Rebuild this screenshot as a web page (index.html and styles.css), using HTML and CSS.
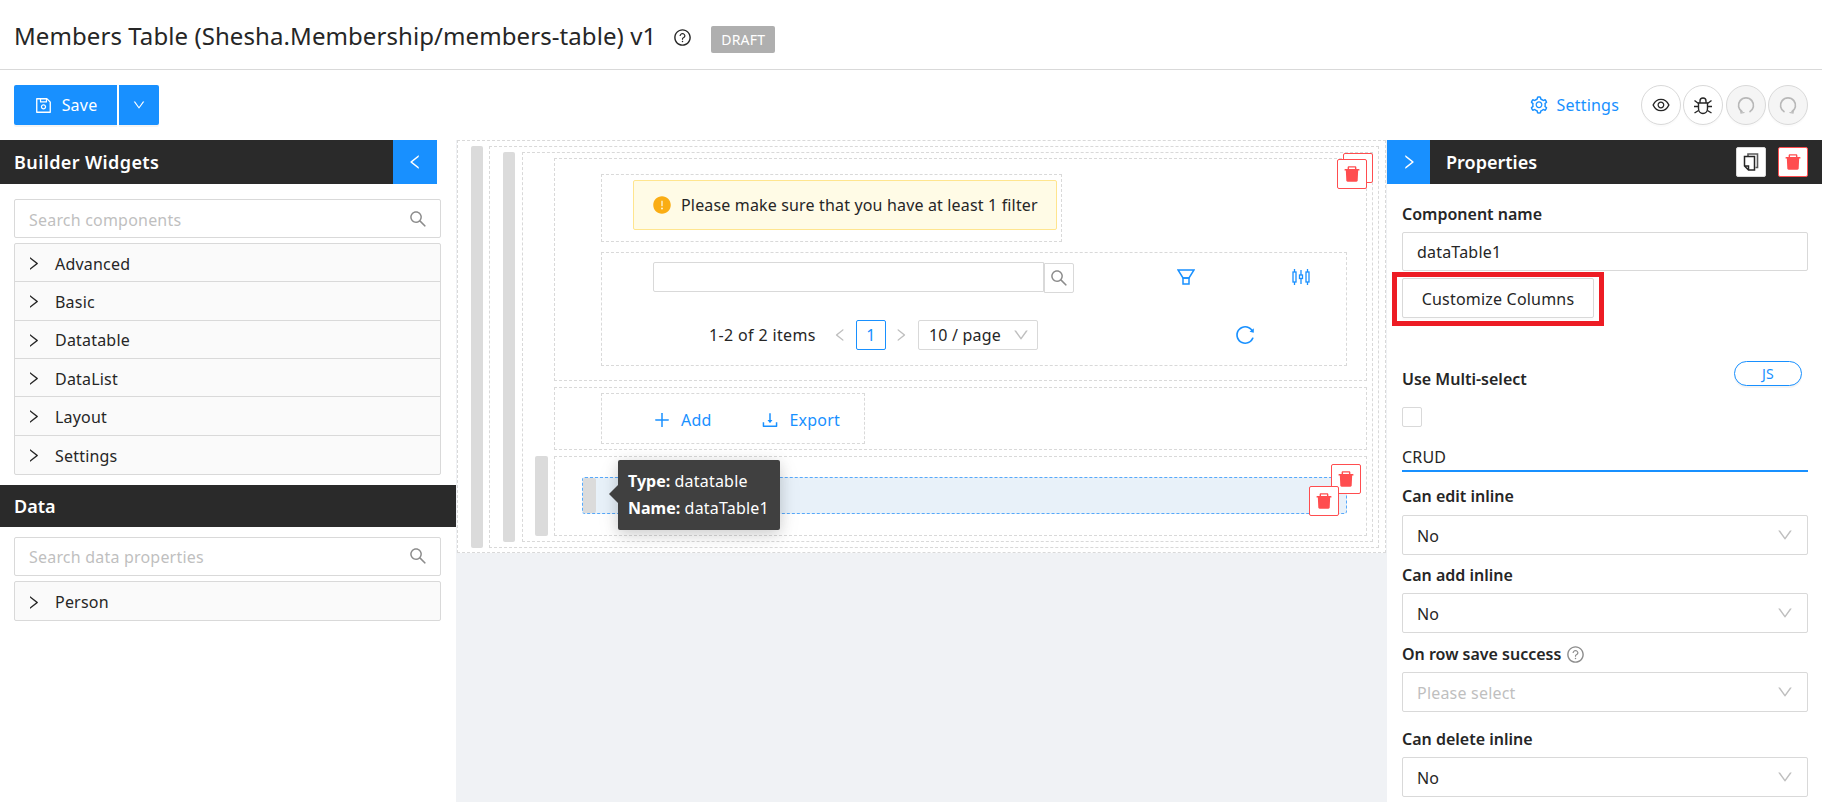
FILE: index.html
```html
<!DOCTYPE html>
<html lang="en">
<head>
<meta charset="utf-8">
<title>Members Table</title>
<link rel="stylesheet" href="styles.css">
</head>
<body>
<svg class="sprite" xmlns="http://www.w3.org/2000/svg">
  <symbol id="i-search" viewBox="0 0 1024 1024"><path d="M909.6 854.5L649.9 594.8C690.2 542.7 712 479 712 412c0-80.2-31.3-155.4-87.9-212.1-56.6-56.7-132-87.9-212.1-87.9s-155.5 31.3-212.1 87.9C143.2 256.5 112 331.8 112 412c0 80.1 31.3 155.5 87.9 212.1C256.5 680.8 331.8 712 412 712c67 0 130.6-21.8 182.7-62l259.7 259.6a8.2 8.2 0 0 0 11.6 0l43.6-43.5a8.2 8.2 0 0 0 0-11.6zM570.4 570.4C528 612.7 471.8 636 412 636s-116-23.3-158.4-65.6C211.3 528 188 471.8 188 412s23.3-116.1 65.6-158.4C296 211.3 352.2 188 412 188s116.1 23.2 158.4 65.6S636 352.2 636 412s-23.3 116.1-65.6 158.4z"/></symbol>
  <symbol id="i-down" viewBox="0 0 1024 1024"><path d="M884 256h-75c-5.1 0-9.9 2.5-12.9 6.6L512 654.2 227.9 262.6c-3-4.1-7.8-6.6-12.9-6.6h-75c-6.5 0-10.3 7.4-6.5 12.7l352.6 486.1c12.8 17.6 39 17.6 51.7 0l352.6-486.1c3.9-5.3.1-12.7-6.4-12.7z"/></symbol>
  <symbol id="i-right" viewBox="0 0 1024 1024"><path d="M765.7 486.8L314.9 134.7A7.97 7.97 0 0 0 302 141v77.3c0 4.9 2.3 9.6 6.1 12.6l360 281.1-360 281.1c-3.9 3-6.1 7.7-6.1 12.6V883c0 6.7 7.7 10.4 12.9 6.3l450.8-352.1a31.96 31.96 0 0 0 0-50.4z"/></symbol>
  <symbol id="i-left" viewBox="0 0 1024 1024"><path d="M724 218.3V141c0-6.7-7.7-10.4-12.9-6.3L260.3 486.8a31.86 31.86 0 0 0 0 50.3l450.8 352.1c5.3 4.1 12.9.4 12.9-6.3v-77.3c0-4.9-2.3-9.6-6.1-12.6l-360-281 360-281.1c3.8-3 6.1-7.7 6.1-12.6z"/></symbol>
  <symbol id="i-plus" viewBox="0 0 1024 1024"><path d="M482 152h60q8 0 8 8v704q0 8-8 8h-60q-8 0-8-8V160q0-8 8-8z"/><path d="M176 474h672q8 0 8 8v60q0 8-8 8H176q-8 0-8-8v-60q0-8 8-8z"/></symbol>
  <symbol id="i-warn" viewBox="0 0 1024 1024"><path d="M512 64C264.6 64 64 264.6 64 512s200.6 448 448 448 448-200.6 448-448S759.4 64 512 64zm-32 232c0-4.4 3.6-8 8-8h48c4.4 0 8 3.6 8 8v272c0 4.4-3.6 8-8 8h-48c-4.4 0-8-3.6-8-8V296zm32 440a48.01 48.01 0 0 1 0-96 48.01 48.01 0 0 1 0 96z"/></symbol>
  <symbol id="i-question" viewBox="0 0 1024 1024"><path d="M512 64C264.6 64 64 264.6 64 512s200.6 448 448 448 448-200.6 448-448S759.4 64 512 64zm0 820c-205.4 0-372-166.6-372-372s166.6-372 372-372 372 166.6 372 372-166.6 372-372 372z"/><path d="M623.6 316.7C593.6 290.4 554 276 512 276s-81.6 14.5-111.6 40.7C369.2 344 352 380.7 352 420v7.6c0 4.4 3.6 8 8 8h48c4.4 0 8-3.6 8-8V420c0-44.1 43.1-80 96-80s96 35.9 96 80c0 31.1-22 59.6-56.1 72.7-21.2 8.1-39.2 22.3-52.1 40.9-13.1 19-19.9 41.8-19.9 64.9V620c0 4.4 3.6 8 8 8h48c4.4 0 8-3.6 8-8v-22.7a48.3 48.3 0 0 1 30.9-44.8c59-22.7 97.1-74.7 97.1-132.5.1-39.3-17.1-76-48.3-103.3z"/><path d="M472 732a40 40 0 1 0 80 0 40 40 0 1 0-80 0z"/></symbol>
  <symbol id="i-eye" viewBox="0 0 1024 1024"><path d="M942.2 486.2C847.4 286.5 704.1 186 512 186c-192.2 0-335.4 100.5-430.2 300.3a60.3 60.3 0 0 0 0 51.5C176.6 737.5 319.9 838 512 838c192.2 0 335.4-100.5 430.2-300.3 7.7-16.2 7.7-35 0-51.5zM512 766c-161.3 0-279.4-81.8-362.7-254C232.6 339.8 350.7 258 512 258c161.3 0 279.4 81.8 362.7 254C791.5 684.2 673.4 766 512 766zm-4-430c-97.2 0-176 78.8-176 176s78.8 176 176 176 176-78.8 176-176-78.8-176-176-176zm0 288c-61.9 0-112-50.1-112-112s50.1-112 112-112 112 50.1 112 112-50.1 112-112 112z"/></symbol>
  <symbol id="i-trash" viewBox="0 0 1024 1024"><path d="M864 256H736v-80c0-35.3-28.7-64-64-64H352c-35.3 0-64 28.7-64 64v80H160c-17.7 0-32 14.3-32 32v32c0 4.4 3.6 8 8 8h60.4l24.7 523c1.6 34.1 29.8 61 63.9 61h454c34.2 0 62.3-26.8 63.9-61l24.7-523H888c4.4 0 8-3.6 8-8v-32c0-17.7-14.3-32-32-32zm-200 0H360v-72h304v72z"/></symbol>
  <symbol id="i-reload" viewBox="0 0 1024 1024"><path d="M909.1 209.3l-56.4 44.1C775.8 155.1 656.2 92 521.9 92 290 92 102.3 279.5 102 511.5 101.7 743.7 289.8 932 521.9 932c181.3 0 335.8-115 394.6-276.1 1.5-4.2-.7-8.9-4.9-10.3l-56.7-19.5a8 8 0 0 0-10.1 4.8c-1.8 5-3.8 10-5.9 14.9-17.3 41-42.1 77.8-73.7 109.4A344.77 344.77 0 0 1 655.9 829c-42.3 17.9-87.4 27-133.8 27-46.5 0-91.5-9.1-133.8-27A341.5 341.5 0 0 1 279 755.2a342.16 342.16 0 0 1-73.7-109.4c-17.9-42.4-27-87.4-27-133.9s9.1-91.5 27-133.9c17.3-41 42.1-77.8 73.7-109.4 31.6-31.6 68.4-56.4 109.3-73.8 42.3-17.9 87.4-27 133.8-27 46.5 0 91.5 9.1 133.8 27a341.5 341.5 0 0 1 109.3 73.8c9.9 9.9 19.2 20.4 27.8 31.4l-60.2 47a8 8 0 0 0 3 14.1l175.6 43c5 1.2 9.9-2.6 9.9-7.7l.8-180.9c-.1-6.6-7.8-10.3-13-6.2z"/></symbol>
  <symbol id="i-gear" viewBox="0 0 1024 1024"><path d="M924.8 625.7l-65.5-56c3.1-19 4.7-38.4 4.7-57.8s-1.6-38.8-4.7-57.8l65.5-56a32.03 32.03 0 0 0 9.3-35.2l-.9-2.6a443.74 443.74 0 0 0-79.7-137.9l-1.8-2.1a32.12 32.12 0 0 0-35.1-9.5l-81.3 28.9c-30-24.6-63.5-44-99.7-57.6l-15.7-85a32.05 32.05 0 0 0-25.8-25.7l-2.7-.5c-52.1-9.4-106.9-9.4-159 0l-2.7.5a32.05 32.05 0 0 0-25.8 25.7l-15.8 85.4a351.86 351.86 0 0 0-99 57.4l-81.9-29.1a32 32 0 0 0-35.1 9.5l-1.8 2.1a446.02 446.02 0 0 0-79.7 137.9l-.9 2.6c-4.5 12.5-.8 26.5 9.3 35.2l66.3 56.6c-3.1 18.8-4.6 38-4.6 57.1 0 19.2 1.5 38.4 4.6 57.1L99 625.5a32.03 32.03 0 0 0-9.3 35.2l.9 2.6c18.1 50.4 44.9 96.9 79.7 137.9l1.8 2.1a32.12 32.12 0 0 0 35.1 9.5l81.9-29.1c29.8 24.5 63.1 43.9 99 57.4l15.8 85.4a32.05 32.05 0 0 0 25.8 25.7l2.7.5a449.4 449.4 0 0 0 159 0l2.7-.5a32.05 32.05 0 0 0 25.8-25.7l15.7-85a350 350 0 0 0 99.7-57.6l81.3 28.9a32 32 0 0 0 35.1-9.5l1.8-2.1c34.8-41.1 61.6-87.5 79.7-137.9l.9-2.6c4.5-12.3.8-26.3-9.3-35zM788.3 465.9c2.5 15.1 3.8 30.6 3.8 46.1s-1.3 31-3.8 46.1l-6.6 40.1 74.7 63.9a370.03 370.03 0 0 1-42.6 73.6L721 702.8l-31.4 25.8c-23.9 19.6-50.5 35-79.3 45.8l-38.1 14.3-17.9 97a377.5 377.5 0 0 1-85 0l-17.9-97.2-37.8-14.5c-28.5-10.8-55-26.2-78.7-45.7l-31.4-25.9-93.4 33.2c-17-22.9-31.2-47.6-42.6-73.6l75.5-64.5-6.5-40c-2.4-14.9-3.7-30.3-3.7-45.5 0-15.3 1.2-30.6 3.7-45.5l6.5-40-75.5-64.5c11.3-26.1 25.6-50.7 42.6-73.6l93.4 33.2 31.4-25.9c23.7-19.5 50.2-34.9 78.7-45.7l37.9-14.3 17.9-97.2c28.1-3.2 56.8-3.2 85 0l17.9 97 38.1 14.3c28.7 10.8 55.4 26.2 79.3 45.8l31.4 25.8 92.8-32.9c17 22.9 31.2 47.6 42.6 73.6L781.8 426l6.5 39.9zM512 326c-97.2 0-176 78.8-176 176s78.8 176 176 176 176-78.8 176-176-78.8-176-176-176zm79.2 255.2A111.6 111.6 0 0 1 512 614c-29.9 0-58-11.7-79.2-32.8A111.6 111.6 0 0 1 400 502c0-29.9 11.7-58 32.8-79.2C454 401.6 482.1 390 512 390c29.9 0 58 11.6 79.2 32.8A111.6 111.6 0 0 1 624 502c0 29.9-11.7 58-32.8 79.2z"/></symbol>
  <symbol id="i-export" viewBox="0 0 1024 1024"><path d="M505.7 661a8 8 0 0 0 12.6 0l112-141.7c4.1-5.2.4-12.9-6.3-12.9h-74.1V168c0-4.4-3.6-8-8-8h-60c-4.4 0-8 3.6-8 8v338.3H400c-6.7 0-10.4 7.7-6.3 12.9l112 141.8zM878 626h-60c-4.4 0-8 3.6-8 8v154H214V634c0-4.4-3.6-8-8-8h-60c-4.4 0-8 3.6-8 8v198c0 17.7 14.3 32 32 32h684c17.7 0 32-14.3 32-32V634c0-4.4-3.6-8-8-8z"/></symbol>
  <symbol id="i-save" viewBox="0 0 1024 1024"><path d="M893.3 293.3L730.7 130.7c-7.5-7.5-16.7-13-26.7-16V112H144c-17.7 0-32 14.3-32 32v736c0 17.7 14.3 32 32 32h736c17.7 0 32-14.3 32-32V338.5c0-17-6.7-33.2-18.7-45.2zM384 184h256v104H384V184zm456 656H184V184h136v136c0 17.7 14.3 32 32 32h320c17.7 0 32-14.3 32-32V205.8l136 136V840zM512 442c-79.5 0-144 64.5-144 144s64.5 144 144 144 144-64.5 144-144-64.5-144-144-144zm0 224c-44.2 0-80-35.8-80-80s35.8-80 80-80 80 35.8 80 80-35.8 80-80 80z"/></symbol>
  <symbol id="i-filter" viewBox="0 0 18 16"><path d="M1 1h16l-5 8h-6z" fill="none" stroke="currentColor" stroke-width="1.500"/><rect x="6" y="9" width="6" height="6" fill="none" stroke="currentColor" stroke-width="1.500"/></symbol>
  <symbol id="i-cols" viewBox="0 0 18 16"><g fill="none" stroke="currentColor" stroke-width="1.300"><rect x="1" y="3" width="3" height="10"/><rect x="7.500" y="6" width="3" height="3.500"/><rect x="14" y="3" width="3" height="10"/><path d="M2.500 0v3M2.500 13v3M9 1v5M9 9.500V15M15.500 0v3M15.500 13v3"/></g></symbol>
  <symbol id="i-bug" viewBox="0 0 20 20"><g fill="none" stroke="currentColor" stroke-width="1.400"><path d="M5.500 8h9v5.500a4.500 5 0 0 1-9 0z"/><path d="M7 8V6a3 3 0 0 1 6 0v2M1 11.500h4.500M14.500 11.500H19M1.500 5.500l4 3M18.500 5.500l-4 3M1.500 18l4-2.500M18.500 18l-4-2.500"/></g></symbol>
  <symbol id="i-arc" viewBox="0 0 20 20"><path d="M6.500 17A7.500 7.500 0 1 1 13.500 17" fill="none" stroke="currentColor" stroke-width="1.700"/><path d="M4.500 14.500l.5 3.500 3.500-.5" fill="none" stroke="currentColor" stroke-width="1.200"/></symbol>
  <symbol id="i-copy" viewBox="0 0 16 18"><path d="M5 3V1h9.500v13.500H12.500" fill="none" stroke="#595959" stroke-width="1.600"/><path d="M1.500 3.500H11.500V17H5.500L1.500 13zM1.500 13H5.500V17" fill="#fff" stroke="currentColor" stroke-width="1.500"/></symbol>
</svg>

<header class="page-header">
  <h1 class="page-title">Members Table (Shesha.Membership/members-table) v1</h1>
  <svg class="icon title-help"><use href="#i-question"/></svg>
  <span class="draft-tag">DRAFT</span>
</header>

<div class="toolbar">
  <button class="btn-primary btn-save"><svg class="icon"><use href="#i-save"/></svg><span>Save</span></button>
  <button class="btn-primary btn-more"><svg class="icon"><use href="#i-down"/></svg></button>
  <a class="settings-link"><svg class="icon"><use href="#i-gear"/></svg><span>Settings</span></a>
  <div class="round-group">
    <button class="round-btn"><svg class="icon icon-lg"><use href="#i-eye"/></svg></button>
    <button class="round-btn"><svg class="icon icon-lg"><use href="#i-bug"/></svg></button>
    <button class="round-btn is-disabled"><svg class="icon icon-lg"><use href="#i-arc"/></svg></button>
    <button class="round-btn is-disabled"><svg class="icon icon-lg flip"><use href="#i-arc"/></svg></button>
  </div>
</div>

<main class="workspace">
  <aside class="left-panel">
    <div class="panel-bar widgets-bar">
      <span class="bar-title">Builder Widgets</span>
      <span class="bar-toggle"><svg class="icon"><use href="#i-left"/></svg></span>
    </div>
    <div class="left-search first-search"><span class="placeholder">Search components</span><svg class="icon"><use href="#i-search"/></svg></div>
    <ul class="collapse">
      <li><svg class="icon icon-arrow"><use href="#i-right"/></svg>Advanced</li>
      <li><svg class="icon icon-arrow"><use href="#i-right"/></svg>Basic</li>
      <li><svg class="icon icon-arrow"><use href="#i-right"/></svg>Datatable</li>
      <li><svg class="icon icon-arrow"><use href="#i-right"/></svg>DataList</li>
      <li><svg class="icon icon-arrow"><use href="#i-right"/></svg>Layout</li>
      <li><svg class="icon icon-arrow"><use href="#i-right"/></svg>Settings</li>
    </ul>
    <div class="panel-bar data-bar"><span class="bar-title">Data</span></div>
    <div class="left-search data-search"><span class="placeholder">Search data properties</span><svg class="icon"><use href="#i-search"/></svg></div>
    <ul class="collapse">
      <li><svg class="icon icon-arrow"><use href="#i-right"/></svg>Person</li>
    </ul>
  </aside>

  <section class="canvas">
    <div class="zone zone-outer">
      <div class="handle"></div>
      <div class="zone zone-mid">
        <div class="handle"></div>
        <div class="zone zone-inner">
          <div class="zone row-table">
            <div class="zone alert-wrap">
              <div class="alert"><svg class="icon alert-icon"><use href="#i-warn"/></svg><span>Please make sure that you have at least 1 filter</span></div>
            </div>
            <div class="zone tools-wrap">
              <div class="tools-top">
                <div class="mini-input"></div>
                <div class="mini-search"><svg class="icon"><use href="#i-search"/></svg></div>
                <svg class="icon tool-filter"><use href="#i-filter"/></svg>
                <svg class="icon tool-cols"><use href="#i-cols"/></svg>
              </div>
              <div class="tools-bottom">
                <span class="page-total">1-2 of 2 items</span>
                <svg class="icon icon-page prev"><use href="#i-left"/></svg>
                <span class="page-num">1</span>
                <svg class="icon icon-page next"><use href="#i-right"/></svg>
                <span class="page-size">10 / page<svg class="icon icon-chev"><use href="#i-down"/></svg></span>
                <svg class="icon tool-reload"><use href="#i-reload"/></svg>
              </div>
            </div>
            <button class="del-btn del-back"><svg class="icon"><use href="#i-trash"/></svg></button>
            <button class="del-btn del-front"><svg class="icon"><use href="#i-trash"/></svg></button>
          </div>
          <div class="zone row-actions">
            <div class="zone actions-wrap">
              <a class="action action-add"><svg class="icon"><use href="#i-plus"/></svg><span>Add</span></a>
              <a class="action action-export"><svg class="icon"><use href="#i-export"/></svg><span>Export</span></a>
            </div>
          </div>
          <div class="row-selected">
            <div class="handle"></div>
            <div class="zone selected-wrap">
              <div class="selected"><div class="handle selected-handle"></div></div>
              <button class="del-btn del-outer"><svg class="icon"><use href="#i-trash"/></svg></button>
              <button class="del-btn del-inner"><svg class="icon"><use href="#i-trash"/></svg></button>
              <div class="tooltip">
                <div><b>Type:</b> datatable</div>
                <div><b>Name:</b> dataTable1</div>
              </div>
            </div>
          </div>
        </div>
      </div>
    </div>
  </section>

  <aside class="right-panel">
    <div class="panel-bar props-bar">
      <span class="bar-toggle"><svg class="icon"><use href="#i-right"/></svg></span>
      <span class="bar-title">Properties</span>
      <button class="bar-btn copy-btn"><svg class="icon"><use href="#i-copy"/></svg></button>
      <button class="bar-btn trash-btn"><svg class="icon"><use href="#i-trash"/></svg></button>
    </div>
    <div class="props-body">
      <label class="prop-label m-name">Component name</label>
      <div class="field field-name m-7">dataTable1</div>
      <div class="customize-wrap">
        <button class="customize">Customize Columns</button>
        <span class="highlight"></span>
      </div>
      <div class="multi-row">
        <label class="prop-label multi-label">Use Multi-select</label>
        <button class="js-pill">JS</button>
      </div>
      <div class="checkbox"></div>
      <div class="section-title">CRUD</div>
      <label class="prop-label m-13">Can edit inline</label>
      <div class="field select m-8">No<svg class="icon icon-chev"><use href="#i-down"/></svg></div>
      <label class="prop-label m-9">Can add inline</label>
      <div class="field select m-7">No<svg class="icon icon-chev"><use href="#i-down"/></svg></div>
      <label class="prop-label m-10">On row save success <svg class="icon label-help"><use href="#i-question"/></svg></label>
      <div class="field select is-empty m-7">Please select<svg class="icon icon-chev"><use href="#i-down"/></svg></div>
      <label class="prop-label m-16">Can delete inline</label>
      <div class="field select m-7">No<svg class="icon icon-chev"><use href="#i-down"/></svg></div>
    </div>
  </aside>
</main>
</body>
</html>
```

FILE: styles.css
```css
* { box-sizing: border-box; }
html, body { margin: 0; height: 802px; overflow: hidden; }
body { font-family: "Noto Sans", "Open Sans", sans-serif; font-size: 16px; letter-spacing: .2px; color: #262626; background: #fff; }
button { font: inherit; letter-spacing: inherit; color: inherit; cursor: pointer; }
ul { list-style: none; margin: 0; padding: 0; }
.sprite { display: none; }
.icon { display: block; width: 16px; height: 16px; fill: currentColor; flex: none; }
.icon-lg { width: 20px; height: 20px; }

.page-header { height: 70px; display: flex; align-items: center; padding-left: 14px; border-bottom: 1px solid #d9d9d9; }
.page-title { margin: 2px 0 0; font-size: 24px; font-weight: 400; line-height: 32px; letter-spacing: .08px; white-space: nowrap; }
.title-help { margin: 5px 0 0 17px; width: 19px; height: 19px; }
.draft-tag { margin: 9px 0 0 19px; height: 27px; width: 64px; display: flex; align-items: center; justify-content: center; background: #afafaf; color: #fff; border-radius: 2px; font-size: 14px; }

.toolbar { height: 70px; padding: 15px 14px; display: flex; align-items: flex-start; }
.btn-primary { height: 40px; background: #1890ff; color: #fff; border: 0; border-radius: 2px 0 0 2px; display: flex; align-items: center; justify-content: center; box-shadow: 0 2px 0 rgba(0,0,0,.045); }
.btn-save { width: 103px; gap: 9px; }
.btn-save .icon { width: 19px; height: 19px; }
.btn-more { width: 40px; margin-left: 2px; border-radius: 0 2px 2px 0; }
.btn-more .icon { width: 14px; height: 14px; }
.settings-link { margin-left: auto; height: 40px; display: flex; align-items: center; gap: 8px; color: #1890ff; }
.settings-link .icon { width: 20px; height: 20px; }
.round-group { margin-left: 22px; display: flex; gap: 2.330px; }
.round-btn { width: 40px; height: 40px; padding: 0; border: 1px solid #d9d9d9; border-radius: 50%; background: #fff; display: flex; align-items: center; justify-content: center; box-shadow: 0 2px 0 rgba(0,0,0,.015); }
.round-btn.is-disabled { background: #f5f5f5; color: #b8b8b8; }
.flip { transform: scaleX(-1); }

.workspace { display: flex; height: 662px; }
.left-panel { width: 456px; flex: none; }
.panel-bar { display: flex; align-items: center; background: #2a2a2a; color: #fff; }
.panel-bar .icon { width: 18px; height: 18px; }
.bar-title { font-size: 18px; font-weight: 600; letter-spacing: 0; }
.widgets-bar { width: 437px; height: 44px; padding-left: 14px; justify-content: space-between; }
.widgets-bar .bar-title { letter-spacing: .4px; }
.bar-toggle { width: 44px; height: 44px; background: #1890ff; display: flex; align-items: center; justify-content: center; }
.data-bar { height: 42px; margin-top: 10px; padding-left: 14px; }
.left-search { width: 427px; height: 39px; margin-left: 14px; border: 1px solid #d9d9d9; border-radius: 2px; display: flex; align-items: center; justify-content: space-between; padding: 0 12px 0 14px; color: #8c8c8c; }
.left-search .icon { width: 20px; height: 20px; }
.first-search { margin-top: 15px; }
.data-search { margin-top: 10px; }
.placeholder { color: #bfbfbf; margin-top: 2px; }
.collapse { width: 427px; margin: 5px 0 0 14px; border: 1px solid #d9d9d9; border-radius: 2px; background: #fafafa; }
.collapse li { height: 38.330px; padding: 2px 0 0 10px; display: flex; align-items: center; gap: 13px; border-bottom: 1px solid #d9d9d9; }
.collapse li:last-child { border-bottom: 0; }
.icon-arrow { width: 17px; height: 17px; }

.canvas { width: 931px; flex: none; background: #f0f2f5; padding: 0 1px; }
.zone { border: 1px dashed #d9d9d9; background: #fff; }
.handle { background: #dbdbdb; border-radius: 2px; flex: none; }
.zone-outer { height: 413px; display: flex; padding: 5px 6px 4px 13px; }
.zone-outer > .handle { width: 12px; height: 402px; margin-right: 6px; }
.zone-mid { flex: 1; display: flex; padding: 5px 5px 5px 13px; }
.zone-mid > .handle { width: 12px; margin-right: 7px; }
.zone-inner { flex: 1; padding: 5px 5px 5px 12px; display: flex; flex-direction: column; gap: 6px; }

.row-table { position: relative; height: 223px; margin-left: 19px; padding: 15px 19px 0 46px; }
.alert-wrap { width: 461px; height: 68px; padding: 5px 4px 0 31px; }
.alert { height: 50px; background: #fffbe6; border: 1px solid #ffe58f; border-radius: 2px; display: flex; align-items: center; padding-left: 18px; gap: 9px; letter-spacing: .16px; }
.alert-icon { width: 20px; height: 20px; color: #faad14; }
.tools-wrap { margin-top: 10px; height: 114px; padding: 9px 0 0 51px; }
.tools-top { display: flex; height: 31px; color: #1890ff; }
.mini-input { width: 391px; height: 30px; border: 1px solid #d9d9d9; border-radius: 2px 0 0 2px; }
.mini-search { width: 30px; height: 30px; margin-top: 1px; border: 1px solid #d9d9d9; border-radius: 0 2px 2px 0; display: flex; align-items: center; justify-content: center; color: #8c8c8c; }
.mini-search .icon { width: 20px; height: 20px; }
.tool-filter { margin-left: 103px; margin-top: 7px; width: 18px; height: 16px; }
.tool-cols { margin-left: 97px; margin-top: 7px; width: 18px; height: 16px; }
.tools-bottom { display: flex; align-items: center; height: 30px; margin-top: 27px; margin-left: 56px; }
.page-total { width: 107px; white-space: nowrap; letter-spacing: .35px; }
.icon-page { width: 16px; height: 16px; color: #bfbfbf; }
.prev { margin-left: 16px; }
.page-num { margin-left: 8px; width: 30px; height: 30px; border: 1px solid #1890ff; border-radius: 2px; color: #1890ff; display: flex; align-items: center; justify-content: center; }
.next { margin-left: 7px; }
.page-size { margin-left: 9px; width: 120px; height: 30px; border: 1px solid #d9d9d9; border-radius: 2px; display: flex; align-items: center; justify-content: space-between; padding: 0 7px 0 10px; white-space: nowrap; }
.icon-chev { width: 18px; height: 18px; color: #bfbfbf; }
.tool-reload { margin-left: 196px; width: 22px; height: 22px; color: #1890ff; }

.del-btn { position: absolute; width: 30px; height: 30px; padding: 0; background: #fff; border: 1px solid #ff4d4f; border-radius: 2px; color: #ff4d4f; display: flex; align-items: center; justify-content: center; }
.del-btn .icon { width: 20px; height: 20px; }
.del-back { top: -6px; right: -7px; }
.del-front { top: 0; right: -1px; }

.row-actions { height: 63px; margin-left: 19px; padding: 5px 0 0 46px; }
.actions-wrap { width: 264px; height: 51px; display: flex; align-items: center; color: #1890ff; padding-top: 2px; }
.action { display: flex; align-items: center; }
.action .icon { width: 20px; height: 20px; }
.action-add { margin-left: 50px; gap: 9px; }
.action-export { margin-left: 48px; gap: 10px; }

.row-selected { display: flex; height: 80px; }
.row-selected > .handle { width: 13px; margin-right: 6px; }
.selected-wrap { position: relative; flex: 1; padding: 20px 19px 0 27px; }
.selected { height: 37px; border: 1px dashed #57a9fb; border-radius: 3px; background: #e8f1f9; padding: 0; }
.selected-handle { width: 13px; height: 35px; }
.del-outer { top: 7px; right: 5px; }
.del-inner { top: 29px; right: 27px; }
.tooltip { position: absolute; left: 63px; top: 3px; width: 162px; height: 70px; background: #404040; color: #fff; border-radius: 2px; padding: 8px 10px; line-height: 27px; white-space: nowrap; box-shadow: 0 3px 14px rgba(0,0,0,.15), 0 6px 24px rgba(0,0,0,.08); }
.tooltip::before { content: ""; position: absolute; left: -9px; top: 25px; border: 9px solid transparent; border-left: 0; border-right-color: #404040; }
.tooltip b { font-weight: 700; letter-spacing: 0; }

.right-panel { width: 435px; flex: none; }
.props-bar { height: 44px; }
.props-bar .bar-toggle { width: 43px; }
.props-bar .bar-title { margin-left: 16px; }
.bar-btn { width: 30px; height: 30px; padding: 0; background: #fff; border: 1px solid #d9d9d9; border-radius: 2px; display: flex; align-items: center; justify-content: center; }
.copy-btn { margin-left: auto; color: #262626; }
.panel-bar .copy-btn .icon { width: 16px; height: 18px; }
.panel-bar .trash-btn .icon { width: 20px; height: 20px; }
.trash-btn { margin: 0 14px 0 12px; color: #ff4d4f; border-color: #ff4d4f; }
.props-body { padding: 19px 14px 0 15px; }
.prop-label { display: flex; align-items: center; gap: 5px; height: 22px; font-weight: 600; letter-spacing: 0; white-space: nowrap; }
.label-help { width: 19px; height: 19px; color: #8c8c8c; }
.m-7 { margin-top: 7px; } .m-8 { margin-top: 8px; } .m-9 { margin-top: 9px; }
.m-10 { margin-top: 10px; } .m-13 { margin-top: 13px; } .m-16 { margin-top: 16px; }
.field { height: 40px; border: 1px solid #d9d9d9; border-radius: 2px; display: flex; align-items: center; padding: 0 14px; }
.field-name { height: 39px; }
.select { justify-content: space-between; padding: 2px 13px 0 14px; }
.select .icon { margin-top: -2px; }
.is-empty { color: #bfbfbf; }
.customize-wrap { position: relative; width: 192px; margin-top: 7px; }
.customize { display: block; width: 192px; height: 40px; background: #fff; border: 1px solid #d9d9d9; border-radius: 2px; padding: 2px 0 0; box-shadow: 0 2px 0 rgba(0,0,0,.015); }
.highlight { position: absolute; left: -10px; top: -6px; right: -10px; bottom: -8px; border: 5px solid #ed1c24; pointer-events: none; }
.multi-row { margin-top: 43px; display: flex; align-items: flex-start; justify-content: space-between; padding-right: 6px; }
.multi-label { margin-top: 7px; }
.js-pill { width: 68px; height: 25px; padding: 0; border: 1px solid #1890ff; border-radius: 13px; background: #fff; color: #1890ff; font-size: 14px; box-shadow: 0 2px 0 rgba(0,0,0,.045); }
.checkbox { width: 20px; height: 20px; margin-top: 17px; border: 1px solid #d9d9d9; border-radius: 2px; }
.section-title { margin-top: 19px; height: 26px; line-height: 22px; border-bottom: 2px solid #1890ff; }
```
